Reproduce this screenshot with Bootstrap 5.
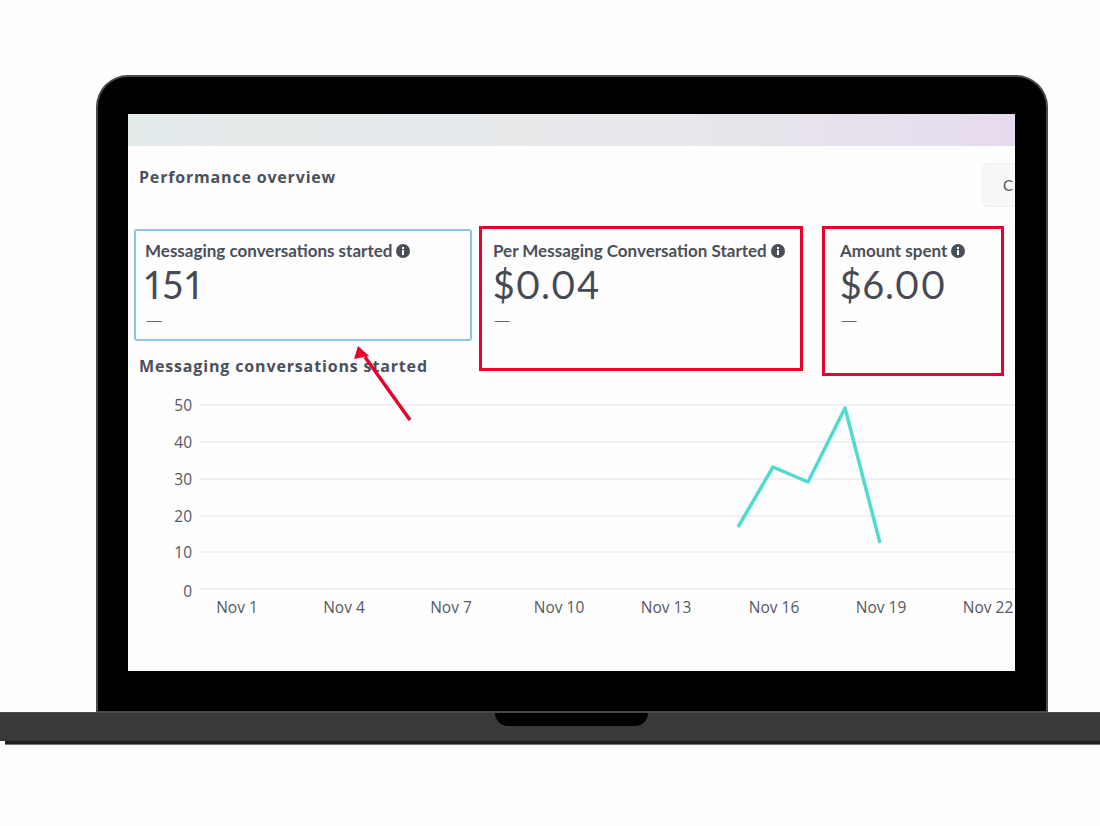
<!DOCTYPE html>
<html lang="en">
<head>
<meta charset="UTF-8">
<title>Performance overview</title>
<link href="https://cdn.jsdelivr.net/npm/bootstrap@5.3.0/dist/css/bootstrap.min.css" rel="stylesheet">
<style>
  body { background: #fefefe; padding-top: 75px; overflow: hidden; font-family: "Lato", "Open Sans", sans-serif; color: #474c55; }
  .lid { width: 952px; height: 637px; margin-left: 96px; padding: 37px 31px 40px 30px; background: #000; border: 2px solid #4a494c; border-bottom-width: 1px; border-radius: 32px 32px 0 0; }
  .screen { height: 557px; background: #fefefe; overflow: hidden; position: relative; }
  .strip { height: 32px; background: linear-gradient(90deg, #e3eaea 0%, #e8e8eb 60%, #e6dbee 100%); }
  .top-row { height: 80px; padding: 17px 0 0 11px; }
  .top-row h1 { font-family: "Open Sans", sans-serif; font-size: 16px; font-weight: 700; letter-spacing: .82px; margin: 5px 0 0; color: #4b505a; }
  .cmp { margin-right: -40px; width: 73px; height: 44px; padding: 0 0 0 20px; background: #f8f8fa; border: 1px solid #f1f1f4; border-radius: 6px; font-size: 15px; color: #555; text-align: left; }
  .metrics { height: 150px; }
  .left-col { width: 338px; margin-left: 6px; padding-top: 3px; }
  .metric { background: #fefefe; padding: 9px 9px 0; border-radius: 0; }
  .metric h2 { font-size: 17px; line-height: 21px; font-weight: 700; margin: 0; color: #4a4f58; white-space: nowrap; display: flex; align-items: center; gap: 4px; }
  .metric .value { font-size: 38px; line-height: 44px; font-weight: 400; letter-spacing: 1px; color: #454a53; margin-top: 1px; font-variant-numeric: proportional-nums; }
  .metric .dash { font-size: 23px; line-height: 24px; font-weight: 300; color: #666; margin-top: 1px; }
  .metric-blue { height: 112px; border: 2px solid #8cc3e6; border-radius: 3px; }
  .metric-blue .value { letter-spacing: 2.5px; }
  .metric-red { border: 3px solid #e8002d; padding: 11px 11px 0; margin-left: 7px; }
  .w-a { width: 324px; height: 145px; }
  .w-b { width: 182px; height: 150px; margin-left: 19px; padding-left: 15px; }
  .chart-title { font-family: "Open Sans", sans-serif; font-size: 16px; font-weight: 700; letter-spacing: .85px; margin: 13px 0 0 5px; color: #4b505a; }
  .chart { display: block; margin-top: 14px; }
  .chart text { font-family: "Open Sans", sans-serif; font-size: 15.5px; fill: #55585f; }
  .arrow { position: absolute; left: 220px; top: 225px; }
  .base { height: 29px; padding-left: 43px; background: #3a383b; border-top: 1px solid #4a494c; }
  .notch { width: 153px; height: 13px; background: #000; border-radius: 0 0 13px 13px; }
  .lip { height: 4px; margin-left: 5px; background: #1d1c1e; border-bottom: 1px solid #77757a; }
</style>
</head>
<body>
  <div class="lid">
    <div class="screen">
      <div class="strip"></div>
      <div class="top-row d-flex justify-content-between align-items-start">
        <h1>Performance overview</h1>
        <button class="cmp" type="button">C</button>
      </div>
      <div class="metrics d-flex align-items-start">
        <div class="left-col flex-shrink-0">
          <div class="metric metric-blue">
            <h2>Messaging conversations started
              <svg width="14" height="14" viewBox="0 0 14 14"><circle cx="7" cy="7" r="7" fill="#4a4f58"/><rect x="6" y="6" width="2" height="5" fill="#fff"/><rect x="6" y="3" width="2" height="2" fill="#fff"/></svg>
            </h2>
            <div class="value">151</div>
            <div class="dash">—</div>
          </div>
          <div class="chart-title">Messaging conversations started</div>
        </div>
        <div class="metric metric-red w-a flex-shrink-0">
          <h2>Per Messaging Conversation Started
            <svg width="14" height="14" viewBox="0 0 14 14"><circle cx="7" cy="7" r="7" fill="#4a4f58"/><rect x="6" y="6" width="2" height="5" fill="#fff"/><rect x="6" y="3" width="2" height="2" fill="#fff"/></svg>
          </h2>
          <div class="value">$0.04</div>
          <div class="dash">—</div>
        </div>
        <div class="metric metric-red w-b flex-shrink-0">
          <h2>Amount spent
            <svg width="14" height="14" viewBox="0 0 14 14"><circle cx="7" cy="7" r="7" fill="#4a4f58"/><rect x="6" y="6" width="2" height="5" fill="#fff"/><rect x="6" y="3" width="2" height="2" fill="#fff"/></svg>
          </h2>
          <div class="value">$6.00</div>
          <div class="dash">—</div>
        </div>
      </div>
      <svg class="chart" width="887" height="245" viewBox="0 0 887 245">
        <g stroke="#f0eff3" stroke-width="2">
          <line x1="72" y1="15" x2="887" y2="15"/>
          <line x1="72" y1="52" x2="887" y2="52"/>
          <line x1="72" y1="89" x2="887" y2="89"/>
          <line x1="72" y1="126" x2="887" y2="126"/>
          <line x1="72" y1="162" x2="887" y2="162"/>
          <line x1="72" y1="199" x2="887" y2="199"/>
        </g>
        <g text-anchor="end">
          <text x="64" y="21">50</text>
          <text x="64" y="58">40</text>
          <text x="64" y="95">30</text>
          <text x="64" y="132">20</text>
          <text x="64" y="168">10</text>
          <text x="64" y="207">0</text>
        </g>
        <g text-anchor="middle">
          <text x="109" y="223">Nov 1</text>
          <text x="216" y="223">Nov 4</text>
          <text x="323" y="223">Nov 7</text>
          <text x="431" y="223">Nov 10</text>
          <text x="538" y="223">Nov 13</text>
          <text x="646" y="223">Nov 16</text>
          <text x="753" y="223">Nov 19</text>
          <text x="860" y="223">Nov 22</text>
        </g>
        <polyline points="610,137 645,77 680,92 717,18 752,153" fill="none" stroke="#4fdccf" stroke-width="3.5" stroke-linejoin="round"/>
      </svg>
      <svg class="arrow" width="70" height="85" viewBox="0 0 70 85">
        <path d="M62 81 L17 18" stroke="#e8002d" stroke-width="3.5" fill="none"/>
        <path d="M10 7 L6 20 L21 17 Z" fill="#e8002d"/>
      </svg>
    </div>
  </div>
  <div class="base d-flex justify-content-center">
    <div class="notch"></div>
  </div>
  <div class="lip"></div>
  <script src="https://cdn.jsdelivr.net/npm/bootstrap@5.3.0/dist/js/bootstrap.bundle.min.js"></script>
</body>
</html>
